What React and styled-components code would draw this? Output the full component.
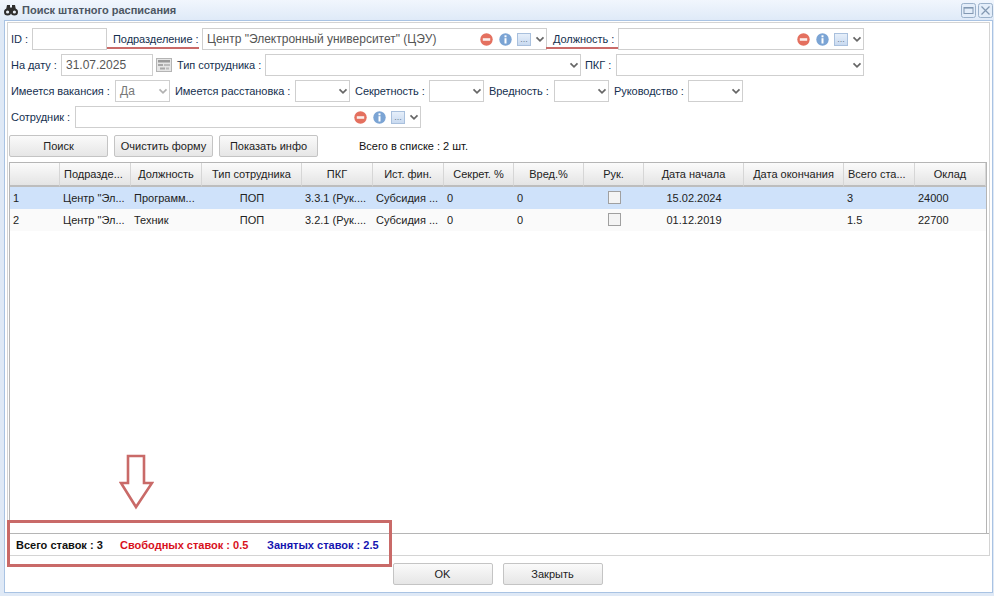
import React from "react";
import styled, { createGlobalStyle } from "styled-components";

const COLUMNS = "50px 71px 71px 100px 71px 71px 70px 70px 60px 100px 100px 71px 71px";

const HEADERS = [
  ["", "left"],
  ["Подразде...", "left"],
  ["Должность", "center"],
  ["Тип сотрудника", "center"],
  ["ПКГ", "center"],
  ["Ист. фин.", "center"],
  ["Секрет. %", "center"],
  ["Вред.%", "center"],
  ["Рук.", "center"],
  ["Дата начала", "center"],
  ["Дата окончания", "center"],
  ["Всего ста...", "left"],
  ["Оклад", "center"],
];

const ROWS = [
  ["1", 'Центр "Эл...', "Программ...", "ПОП", "3.3.1 (Рук....", "Субсидия ...", "0", "0", null, "15.02.2024", "", "3", "24000"],
  ["2", 'Центр "Эл...', "Техник", "ПОП", "3.2.1 (Рук....", "Субсидия ...", "0", "0", null, "01.12.2019", "", "1.5", "22700"],
];

const Binoculars = () => (
  <svg width="14" height="12" viewBox="0 0 14 12">
    <circle cx="3.6" cy="8" r="2.6" fill="#e8eef6" stroke="#2e2e2e" strokeWidth="2" />
    <circle cx="10.4" cy="8" r="2.6" fill="#e8eef6" stroke="#2e2e2e" strokeWidth="2" />
    <path d="M2 6 L3 1 H6 V6 Z M12 6 L11 1 H8 V6 Z" fill="#2e2e2e" />
    <rect x="5.5" y="3.5" width="3" height="4" fill="#2e2e2e" />
  </svg>
);

const Chevron = () => (
  <svg width="10" height="7" viewBox="0 0 10 7">
    <path d="M1.5 1.3 L5 4.8 L8.5 1.3" fill="none" stroke="#666" strokeWidth="1.7" />
  </svg>
);

const MinusIcon = () => (
  <svg width="13" height="13" viewBox="0 0 13 13">
    <circle cx="6.5" cy="6.5" r="6.2" fill="#e4705f" />
    <rect x="2.8" y="5.2" width="7.4" height="2.6" fill="#fbeeec" />
  </svg>
);

const InfoIcon = () => (
  <svg width="13" height="13" viewBox="0 0 13 13">
    <circle cx="6.5" cy="6.5" r="6.2" fill="#7ba4d4" />
    <rect x="5.5" y="2.3" width="2" height="2" fill="#fff" />
    <rect x="5.5" y="5.2" width="2" height="5.3" fill="#fff" />
  </svg>
);

const CalendarIcon = () => (
  <svg width="16" height="14" viewBox="0 0 16 14">
    <rect x="0.5" y="0.5" width="15" height="13" fill="#e6e6e6" stroke="#b4b4b4" />
    <rect x="2" y="2" width="12" height="2.5" fill="#9a9a9a" />
    <rect x="2" y="6" width="5" height="2" fill="#a8a8a8" />
    <rect x="8" y="6" width="6" height="2" fill="#bcbcbc" />
    <rect x="4" y="9.5" width="5" height="2" fill="#a8a8a8" />
    <rect x="10" y="9.5" width="3" height="2" fill="#bcbcbc" />
  </svg>
);

const RestoreIcon = () => (
  <svg width="15" height="15" viewBox="0 0 15 15">
    <rect x="0.5" y="0.5" width="14" height="14" rx="2" fill="#e3edf9" stroke="#9bb1ca" />
    <rect x="3" y="4.5" width="9" height="6" fill="none" stroke="#8298b2" />
    <rect x="3" y="4" width="9" height="1.6" fill="#8298b2" />
  </svg>
);

const CloseIcon = () => (
  <svg width="15" height="15" viewBox="0 0 15 15">
    <rect x="0.5" y="0.5" width="14" height="14" rx="2" fill="#e3edf9" stroke="#9bb1ca" />
    <path d="M3.5 3.5 L11.5 11.5 M11.5 3.5 L3.5 11.5" stroke="#8298b2" strokeWidth="1.2" />
  </svg>
);

const ComboTools = () => (
  <>
    <ToolSlot $gap={6}><MinusIcon /></ToolSlot>
    <ToolSlot $gap={5}><InfoIcon /></ToolSlot>
    <DotsButton>...</DotsButton>
    <Arrow><Chevron /></Arrow>
  </>
);

const SelectArrow = () => (
  <>
    <FieldText />
    <Arrow><Chevron /></Arrow>
  </>
);

export default function App() {
  return (
    <Window>
      <GlobalStyle />
      <TitleBar>
        <TitleIcon><Binoculars /></TitleIcon>
        <Title>Поиск штатного расписания</Title>
        <TitleTools>
          <RestoreIcon />
          <CloseIcon />
        </TitleTools>
      </TitleBar>
      <Panel>
        <InnerBox>
          <Form>
            <FormRow>
              <Label $w={21}>ID :</Label>
              <Field $w={75} />
              <Label $w={89} $ml={6} $markLeft={-6} $markRight={3}>Подразделение :</Label>
              <Field $w={345}>
                <FieldText>Центр "Электронный университет" (ЦЭУ)</FieldText>
                <ComboTools />
              </Field>
              <Label $w={65} $ml={6} $markLeft={-7} $markRight={0}>Должность :</Label>
              <Field $w={246}>
                <FieldText />
                <ComboTools />
              </Field>
            </FormRow>
            <FormRow>
              <Label $w={50}>На дату :</Label>
              <Field $w={92}><FieldText>31.07.2025</FieldText></Field>
              <CalendarSlot><CalendarIcon /></CalendarSlot>
              <Label $w={88} $ml={3}>Тип сотрудника :</Label>
              <Field $w={316}><SelectArrow /></Field>
              <Label $w={31} $ml={4}>ПКГ :</Label>
              <Field $w={248}><SelectArrow /></Field>
            </FormRow>
            <FormRow>
              <Label $w={104}>Имеется вакансия :</Label>
              <Field $w={55} $muted>
                <FieldText>Да</FieldText>
                <Arrow $muted><Chevron /></Arrow>
              </Field>
              <Label $w={116} $ml={5}>Имеется расстановка :</Label>
              <Field $w={55} $ml={4}><SelectArrow /></Field>
              <Label $w={70} $ml={5}>Секретность :</Label>
              <Field $w={55} $ml={4}><SelectArrow /></Field>
              <Label $w={61} $ml={5}>Вредность :</Label>
              <Field $w={55} $ml={4}><SelectArrow /></Field>
              <Label $w={70} $ml={5}>Руководство :</Label>
              <Field $w={55} $ml={4}><SelectArrow /></Field>
            </FormRow>
            <FormRow>
              <Label $w={64}>Сотрудник :</Label>
              <Field $w={346}>
                <FieldText />
                <ComboTools />
              </Field>
            </FormRow>
          </Form>
          <ActionBar>
            <Button $w={99}>Поиск</Button>
            <Button $w={99}>Очистить форму</Button>
            <Button $w={99}>Показать инфо</Button>
            <ListCount>Всего в списке : 2 шт.</ListCount>
          </ActionBar>
          <Grid>
            <GridRow $header>
              {HEADERS.map(([text, align], i) => (
                <HeadCell key={i} $align={align}>{text}</HeadCell>
              ))}
            </GridRow>
            {ROWS.map((row, r) => (
              <GridRow key={r} $selected={r === 0}>
                {row.map((val, i) => (
                  <Cell key={i} $align={[3, 8, 9].includes(i) ? "center" : "left"}>
                    {val === null ? <CheckBox /> : val}
                  </Cell>
                ))}
              </GridRow>
            ))}
          </Grid>
          <Summary>
            <SummaryItem $color="#111" $w={104}>Всего ставок : 3</SummaryItem>
            <SummaryItem $color="#d8111c" $w={147}>Свободных ставок : 0.5</SummaryItem>
            <SummaryItem $color="#1414b0">Занятых ставок : 2.5</SummaryItem>
          </Summary>
        </InnerBox>
        <DialogButtons>
          <Button $w={100}>OK</Button>
          <Button $w={100}>Закрыть</Button>
        </DialogButtons>
      </Panel>
      <DownArrow width="35" height="56" viewBox="0 0 35 56">
        <path d="M9 2 H25 V29 H33 L17 53 L2 29 H9 Z" fill="#fff" stroke="#c96a68" strokeWidth="2.6" />
      </DownArrow>
      <Callout />
    </Window>
  );
}

const GlobalStyle = createGlobalStyle`
  html, body {
    margin: 0;
    padding: 0;
    background: #dfe9f6;
  }
  * {
    box-sizing: border-box;
  }
`;

const Window = styled.div`
  position: relative;
  width: 994px;
  height: 596px;
  overflow: hidden;
  display: flex;
  flex-direction: column;
  background: #dfe9f6;
  font-family: "Liberation Sans", Arial, sans-serif;
  font-size: 11px;
  color: #15304f;
`;

const TitleBar = styled.div`
  height: 20px;
  flex: none;
  display: flex;
  align-items: center;
  padding: 0 1px 0 4px;
  background: linear-gradient(#f1f6fd, #dfeaf8);
`;

const TitleIcon = styled.span`
  display: flex;
  margin-right: 4px;
`;

const Title = styled.span`
  font-size: 11px;
  font-weight: bold;
  color: #4c5662;
`;

const TitleTools = styled.div`
  margin-left: auto;
  display: flex;
  gap: 2px;
`;

const Panel = styled.div`
  flex: none;
  height: 573px;
  margin: 0 1px 0 4px;
  padding: 1px 2px 0;
  background: #fff;
  border: 1px solid #a9c3e3;
  display: flex;
  flex-direction: column;
`;

const InnerBox = styled.div`
  flex: none;
  height: 534px;
  padding: 5px 2px 0 1px;
  border: 1px solid #d4d4d4;
  display: flex;
  flex-direction: column;
`;

const Form = styled.div`
  display: flex;
  flex-direction: column;
  gap: 4px;
  padding-left: 2px;
`;

const FormRow = styled.div`
  display: flex;
  height: 22px;
  align-items: stretch;
`;

const Label = styled.label`
  position: relative;
  flex: none;
  width: ${(p) => p.$w}px;
  margin-left: ${(p) => p.$ml || 0}px;
  line-height: 22px;
  font-size: 11px;
  letter-spacing: -0.05px;
  white-space: nowrap;
  color: #15304f;

  ${(p) =>
    p.$markLeft !== undefined &&
    `
    &::after {
      content: "";
      position: absolute;
      left: ${p.$markLeft}px;
      right: ${p.$markRight}px;
      bottom: 1px;
      height: 2px;
      background: #c96a68;
    }
  `}
`;

const Field = styled.div`
  flex: none;
  width: ${(p) => p.$w}px;
  margin-left: ${(p) => p.$ml || 0}px;
  display: flex;
  align-items: center;
  border: 1px solid #cfcfcf;
  background: #fff;
  color: ${(p) => (p.$muted ? "#777" : "#555")};
`;

const FieldText = styled.span`
  flex: 1;
  min-width: 0;
  padding-left: 4px;
  font-size: 12px;
  white-space: nowrap;
  color: inherit;
`;

const ToolSlot = styled.span`
  display: flex;
  flex: none;
  margin-right: ${(p) => p.$gap}px;
`;

const DotsButton = styled.span`
  flex: none;
  width: 14px;
  height: 13px;
  margin-right: 2px;
  border: 1px solid #a9c0dd;
  background: linear-gradient(#e6effa, #c9daf0);
  color: #6d7f95;
  font-size: 9px;
  line-height: 11px;
  text-align: center;
`;

const Arrow = styled.span`
  flex: none;
  width: 13px;
  display: flex;
  justify-content: center;
  opacity: ${(p) => (p.$muted ? 0.5 : 1)};
`;

const CalendarSlot = styled.span`
  flex: none;
  width: 18px;
  margin-left: 3px;
  display: flex;
  align-items: center;
`;

const ActionBar = styled.div`
  display: flex;
  align-items: center;
  gap: 6px;
  margin-top: 7px;
  height: 22px;
`;

const Button = styled.button`
  flex: none;
  width: ${(p) => p.$w}px;
  height: 22px;
  padding: 0;
  border: 1px solid #c4c4c4;
  border-radius: 2px;
  background: linear-gradient(#fafafa, #e6e6e6);
  font-family: inherit;
  font-size: 11px;
  color: #222;
`;

const ListCount = styled.span`
  margin-left: 35px;
  font-size: 11px;
  color: #111;
`;

const Grid = styled.div`
  flex: none;
  height: 371px;
  margin-top: 5px;
  display: flex;
  flex-direction: column;
  border: 1px solid #b5b5b5;
  border-bottom: none;
`;

const GridRow = styled.div`
  flex: none;
  display: grid;
  grid-template-columns: ${COLUMNS};
  height: ${(p) => (p.$header ? 24 : 22)}px;
  background: ${(p) => (p.$header ? "transparent" : p.$selected ? "#cfe2fa" : "#fafafa")};
`;

const HeadCell = styled.div`
  display: flex;
  align-items: center;
  justify-content: ${(p) => (p.$align === "center" ? "center" : "flex-start")};
  padding: 0 4px;
  border-right: 1px solid #d6d6d6;
  border-bottom: 2px solid #bdbdbd;
  background: linear-gradient(#fbfbfb, #e4e4e4);
  font-size: 11px;
  color: #222;
  white-space: nowrap;
  overflow: hidden;
`;

const Cell = styled.div`
  display: flex;
  align-items: center;
  justify-content: ${(p) => (p.$align === "center" ? "center" : "flex-start")};
  padding: 0 3px 1px;
  font-size: 11px;
  color: #222;
  white-space: nowrap;
  overflow: hidden;
`;

const CheckBox = styled.span`
  display: block;
  width: 13px;
  height: 13px;
  border: 1px solid #a0a0a0;
  background: #f4f4f4;
`;

const Summary = styled.div`
  flex: none;
  height: 22px;
  margin: 0 -2px 0 -1px;
  display: flex;
  align-items: center;
  padding-left: 8px;
  border-top: 1px solid #b5b5b5;
`;

const SummaryItem = styled.span`
  flex: none;
  width: ${(p) => (p.$w ? `${p.$w}px` : "auto")};
  font-size: 11px;
  font-weight: bold;
  color: ${(p) => p.$color};
  white-space: nowrap;
`;

const DialogButtons = styled.div`
  display: flex;
  justify-content: center;
  gap: 10px;
  margin-top: 7px;
  padding-right: 2px;
`;

const DownArrow = styled.svg`
  position: absolute;
  left: 119px;
  top: 454px;
`;

const Callout = styled.div`
  position: absolute;
  left: 7px;
  top: 520px;
  width: 385px;
  height: 47px;
  border: 3px solid #c96a68;
  pointer-events: none;
`;
